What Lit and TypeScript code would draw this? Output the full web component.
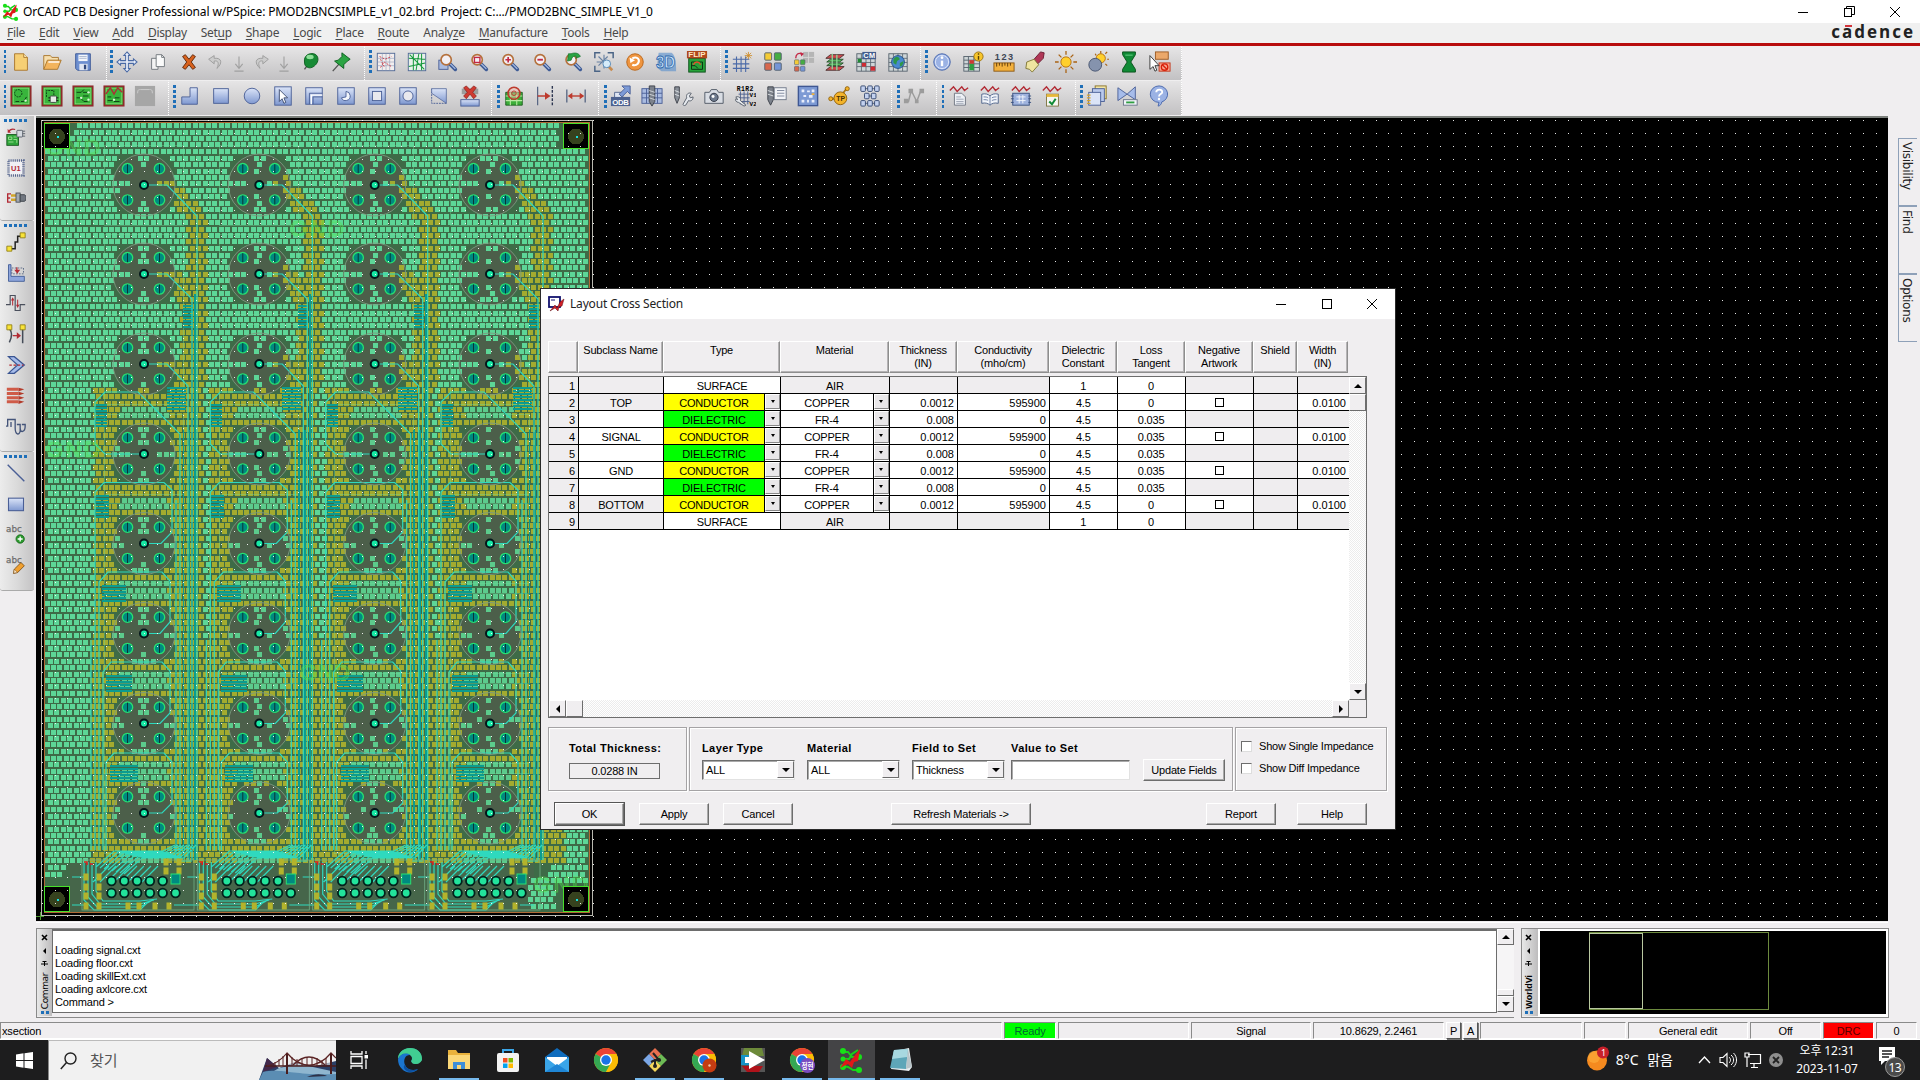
import { LitElement, html, svg, css, nothing } from "lit";
import { customElement } from "lit/decorators.js";

/* ---------- toolbar icons, all on a 24 x 24 grid ---------- */
const B = "#a9bbe0";
const BD = "#4a5f96";
const lens = (inner: any) => svg`<path d="M14 14l6 6" stroke="#3f5c96" stroke-width="4" stroke-linecap="round"/><path d="M14.5 14l5.5 5.5" stroke="#a9bfe4" stroke-width="1.4"/><circle cx="10" cy="9.500" r="5.600" fill="#f3f0f4" stroke="#b5713d" stroke-width="1.800"/>${inner}`;
const sheet = svg`<path d="M7 9h8l4 4v9H7z" fill="#eef1f6" stroke="#6d7480"/><path d="M9 13h5M9 15.500h8M9 18h8M9 20h8" stroke="#8a93a3" stroke-width=".8"/>`;
const wave = svg`<path d="M2 6l4-4 4 5 5-5 3 4 4-3" fill="none" stroke="#b22a34" stroke-width="1.500"/>`;
const board = (inner: any) => svg`<rect x="1.500" y="1.500" width="21" height="21" fill="#39b53c" stroke="#8e2b2b" stroke-width="2"/><rect x="3.500" y="3.500" width="17" height="17" fill="none" stroke="#86dd7c" stroke-width=".8"/>${inner}`;
const chk = (x: number, y: number, c: string) => svg`<rect x=${x} y=${y} width="7.500" height="8" rx="1" fill=${c} stroke="#53606f"/>`;
const table = svg`<rect x="2" y="3" width="20" height="19" fill="#cfd6d8" stroke="#58646e"/><path d="M2 8h20M2 12.500h20M2 17h20M7 3v19M12 3v19M17 3v19" stroke="#58646e" stroke-width=".9"/>`;

const ICONS: Record<string, any> = {
  new: svg`<path d="M5 3h10l4 4v14H5z" fill="#f6cf74" stroke="#a8752c"/><path d="M15 3v4h4" fill="#fff0bd" stroke="#a8752c"/>`,
  open: svg`<path d="M3 20V5h7l2 2h7v4" fill="#f7dfae" stroke="#a8752c"/><path d="M3 20l4-10h15l-4 10z" fill="#f3b45c" stroke="#a8752c"/><path d="M8 12h12" stroke="#fff" stroke-width="1.500"/>`,
  save: svg`<path d="M4 3h16v18H6l-2-2z" fill="#6d8fd0" stroke="#3a5796"/><rect x="7" y="4" width="10" height="7" fill="#f3f6fb"/><path d="M8 6h8M8 8h8" stroke="#a8b6cf"/><rect x="8" y="14" width="9" height="7" fill="#dfe5f1"/><rect x="13" y="15" width="2.500" height="5" fill="#32497c"/>`,
  move: svg`<path d="M12 1l3.500 4h-2v5.500h5.500v-2l4 3.500-4 3.500v-2h-5.500v5.500h2L12 23l-3.500-4h2v-5.500H5v2L1 12l4-3.500v2h5.500V5h-2z" fill="#e8eefa" stroke="#4a6aa5" stroke-width="1.100"/>`,
  copy: svg`<path d="M5 8h7v12H5z" fill="#f3f3f3" stroke="#71767c"/><path d="M10 4h6l3 3v10h-9z" fill="#fafafa" stroke="#71767c"/><path d="M16 4v3h3" fill="none" stroke="#71767c"/>`,
  del: svg`<path d="M5 6l3-2 4 5 4-5 3 2-4.500 6 4.500 6-3 2-4-5-4 5-3-2 4.500-6z" fill="#d8611d" stroke="#5d2508"/>`,
  undo: svg`<path d="M10 5L4 9l6 5v-3c4-1 6 2 3 8 6-5 6-12-3-11z" fill="#ccc" stroke="#9b9b9b"/>`,
  redo: svg`<path d="M14 5l6 4-6 5v-3c-4-1-6 2-3 8-6-5-6-12 3-11z" fill="#ccc" stroke="#9b9b9b"/>`,
  down: svg`<path d="M12 6v12M8 14l4 5 4-5M7 22h10" fill="none" stroke="#a0a0a0" stroke-width="1.200"/>`,
  pinball: svg`<path d="M6 20l5-7" stroke="#555" stroke-width="1.500"/><path d="M6 12c-1-7 5-10 10-9 5 1 6 7 3 11-3 4-7 5-9 4-3-1-4-3-4-6z" fill="#178a35" stroke="#0b5c1e"/><ellipse cx="12" cy="6.500" rx="4" ry="2.400" fill="#8fe09a"/>`,
  pin: svg`<path d="M3 22l8-9" stroke="#555" stroke-width="1.500"/><path d="M13 2l9 7-3 2-4 4v4l-10-8 4-1 4-4z" fill="#2ba443" stroke="#0b5c1e"/>`,
  rats1: svg`<rect x="2.500" y="2.500" width="19" height="19" fill="#f3eeee" stroke="#526a96"/><path d="M3 8h18M3 12h18M3 16h18M8 3v18M12 3v18M16 3v18" stroke="#9aa5bd" stroke-width=".7"/><path d="M5 6l6 3 7-3M6 18l4-6 8 5M6 9l4 8" stroke="#cf3945" fill="none" stroke-dasharray="2 1.500"/>`,
  rats2: svg`<rect x="2.500" y="2.500" width="19" height="19" fill="#e8f1ea" stroke="#526a96"/><path d="M3 8l18 1M3 17l18-4M8 3v18M14 3l-3 18M17 3v18M4 4l16 16" stroke="#16993c" fill="none" stroke-width="1.100"/>`,
  zwin: svg`<rect x="2" y="10" width="10" height="10" fill=${B} stroke=${BD}/>${lens(nothing)}`,
  zfit: lens(svg`<rect x="7" y="7" width="6" height="5.500" fill="none" stroke="#c22845" stroke-width="1.500"/>`),
  zin: lens(svg`<path d="M7 9.500h6M10 6.500v6" stroke="#c22845" stroke-width="1.800"/>`),
  zout: lens(svg`<path d="M7 9.500h6" stroke="#c22845" stroke-width="2"/>`),
  zprev: lens(svg`<path d="M10 3c5-2 9 0 10 3l-5 2 1-2c-3-1-5 0-6 4l-4 1 1-8z" fill="#2ba443" stroke="#0b6a22" stroke-width=".7"/>`),
  zsel: svg`<path d="M2 8V2h6M16 2h6v6M2 16v6h6" fill="none" stroke="#4a6486" stroke-width="1.600"/><path d="M12 4v15M4 12h14M6 6l10 10M16 6L6 16" stroke="#6780a2" stroke-width="1.200"/><path d="M17 17l4 4" stroke="#c88b4e" stroke-width="3"/><circle cx="15" cy="14" r="4.200" fill="#d6ecfa" stroke="#5285b5"/>`,
  refresh: svg`<circle cx="12" cy="12" r="9" fill="#ef9540" stroke="#b96518"/><path d="M9 8c6-3 9 2 6 6-2 2-4 2-6 1" fill="none" stroke="#fff" stroke-width="2.200"/><path d="M6 7l1 6 5-3z" fill="#fff"/>`,
  three: svg`<path d="M4 2h14c5 3 5 14 5 20H7l-5-4z" fill="#5e92cc" opacity=".65"/><text x="1" y="18.500" font-family="Liberation Sans" font-size="18" font-weight="700" fill="#cfe6fb" stroke="#2d68ab" stroke-width=".9" textLength="21" lengthAdjust="spacingAndGlyphs">3D</text>`,
  flip: svg`<rect x="3" y="8" width="18" height="15" fill="#27a33a" stroke="#0b4e18"/><path d="M6 12h12v8H6zM6 16h4l3 3" fill="none" stroke="#0a2c10"/><path d="M8 15c2-4 6-4 8 0" fill="none" stroke="#e0532c" stroke-width="1.600"/><rect x="1" y="0" width="22" height="8" fill="#b0481c"/><text x="2.500" y="7" font-family="Liberation Sans" font-size="7.500" font-weight="700" fill="#ffe7c2" textLength="19" lengthAdjust="spacingAndGlyphs">FLIP</text>`,
  grid: svg`<path d="M2 9h18M2 14h18M2 19h18M6 6v17M11 6v17M16 6v17" stroke="#4b6aa8" stroke-width="1.200"/><path d="M19 1v8M15 5h8M16 2l6 6M22 2l-6 6" stroke="#cf8a25" stroke-width=".9"/>`,
  four: svg`${chk(3, 2, "#f4cb36")}${chk(13.500, 2, "#46ad42")}${chk(3, 13, "#d8674c")}${chk(13.500, 13, "#7595d6")}`,
  fourb: svg`<path d="M11 1h12v12H11z" fill="#b5b5b5"/><path d="M17 1v12M11 7h12" stroke="#d9d9d9"/><path d="M3 8c0-5 3-6 6-5" stroke="#c22845" fill="none" stroke-width="1.500"/><path d="M8 1l4 2-3 3z" fill="#c22845"/><g transform="translate(1 9) scale(.65)">${chk(1, 1, "#f4cb36")}${chk(11, 1, "#46ad42")}${chk(1, 12, "#d8674c")}${chk(11, 12, "#7595d6")}</g>`,
  layers: svg`<path d="M2 8l5-4h15l-5 4z" fill="#d34b4f" stroke="#4c3130"/><path d="M3 12l4-3h14l-4 3zM3 16l4-3h14l-4 3z" fill="#58b460" stroke="#274f2b"/><path d="M2 21l5-4h15l-5 4z" fill="#d34b4f" stroke="#4c3130"/><path d="M9 3v17M14 4v17" stroke="#8fd298" stroke-width="1.500"/>`,
  cm: svg`${table}<rect x="3" y="8.500" width="4" height="4" fill="#1e8a33"/><rect x="7.500" y="13" width="4.500" height="4" fill="#cf2b32"/><rect x="17" y="17" width="5" height="4.500" fill="#cf2b32"/><rect x="8" y="1" width="15" height="8" fill="#425c8e"/><text x="9" y="8" font-family="Liberation Sans" font-size="8" font-weight="700" fill="#fff" textLength="13">CM</text>`,
  globe: svg`${table}<circle cx="12" cy="12" r="7" fill="#4989d0" stroke="#234e85"/><path d="M7 9c3-4 6-3 7 0l-3 2-1 4-3-2zM14 13l4-2c0 4-2 6-4 6z" fill="#2d9748"/>`,
  info: svg`<circle cx="12" cy="12" r="9" fill="#9bb2e4" stroke="#4766ab"/><circle cx="12" cy="12" r="7.200" fill="none" stroke="#dfe7fa"/><path d="M12 10.500v6" stroke="#fff" stroke-width="2.600"/><circle cx="12" cy="7.300" r="1.500" fill="#fff"/>`,
  tinfo: svg`<rect x="2" y="6" width="17" height="16" fill="#cfd6d8" stroke="#58646e"/><path d="M2 10h17M2 14h17M2 18h17M7 6v16M13 6v16" stroke="#58646e"/><rect x="8" y="10" width="5" height="4" fill="#cf3a32"/><rect x="8" y="14" width="5" height="7" fill="#2f9e41"/><circle cx="18" cy="6" r="5" fill="#f7c52b" stroke="#9b7210"/><path d="M18 5.500v4M18 2.500v1.500" stroke="#5c4204" stroke-width="1.500"/>`,
  ruler: svg`<text x="2" y="10" font-family="Liberation Sans" font-size="10" font-weight="700" fill="#3d4654" textLength="20">123</text><rect x="1" y="13" width="22" height="9" fill="#f3b13d" stroke="#8a5714"/><path d="M4 13v4M7 13v3M10 13v4M13 13v3M16 13v4M19 13v3" stroke="#5a370a"/>`,
  brush: svg`<path d="M11 9l7-8 4 1-1 6-6 6z" fill="#b03757" stroke="#6b1930"/><path d="M3 12l8-3 5 6-7 8-3-3-4-1z" fill="#efe4a0" stroke="#7e7535"/>`,
  sun: svg`<path d="M12 0v4M12 20v4M0 12h4M20 12h4M4 4l3 3M17 17l3 3M20 4l-3 3M4 20l3-3" stroke="#a96213" stroke-width="1.400"/><circle cx="12" cy="12" r="5.600" fill="#ffd02d" stroke="#b56e10"/>`,
  dim: svg`<path d="M15 0v3M22 9h2M20 3l2-2M9 3l1 2M20 14l2 2" stroke="#a96213" stroke-width="1.300"/><circle cx="15" cy="8" r="5" fill="#ffd02d" stroke="#b56e10"/><circle cx="9" cy="15" r="7" fill="#8593ad" stroke="#46536e"/>`,
  hour: svg`<path d="M5 1h14v3l-5 8 5 8v3H5v-3l5-8-5-8z" fill="#0f8a35" stroke="#075019"/><path d="M8 4.500h8" stroke="#6fd48c"/>`,
  noselect: svg`<rect x="7" y="1" width="14" height="8" fill="#eba86a" stroke="#9c5a23"/><rect x="11" y="13" width="12" height="9" fill="#f8a58e" stroke="#c2371c"/><circle cx="17" cy="17.500" r="3.500" fill="none" stroke="#d8200a" stroke-width="1.500"/><path d="M14.500 15l5 5" stroke="#d8200a" stroke-width="1.500"/><path d="M1 5v15l3.500-3 2 5 2-1-2-5H11z" fill="#fff" stroke="#333"/>`,
  b1: board(svg`<circle cx="9" cy="9" r="4" fill="none" stroke="#0c3a14" stroke-dasharray="2 1"/><path d="M12 18h3l3-5M6 18h4" stroke="#0c3a14" fill="none"/><circle cx="17" cy="17" r="1.300" fill="#d9f5d4"/>`),
  b2: board(svg`<path d="M6 13V6h8v5" fill="none" stroke="#0c3a14" stroke-dasharray="2 1"/><rect x="10" y="12" width="7" height="7" rx="1" fill="#e9ede9" stroke="#3d463f"/><path d="M8 14h2M8 17h2M17 14h2M17 17h2" stroke="#111"/>`),
  b3: board(svg`<path d="M5 8h5l3-3M5 14h4l4 4h4M12 12h6M12 8h6" fill="none" stroke="#0c3a14"/><circle cx="18" cy="8" r="1.300" fill="#d9f5d4"/><circle cx="10" cy="14" r="1.300" fill="#d9f5d4"/><circle cx="18" cy="16" r="1.300" fill="#d9f5d4"/>`),
  b4: board(svg`<path d="M3 10l5-7 4 7 4-7 5 5" fill="none" stroke="#b22a34" stroke-width="1.500"/><path d="M5 17h5l3-3h5M5 13h4M12 18h6" fill="none" stroke="#0c3a14"/><circle cx="12" cy="16" r="1.300" fill="#d9f5d4"/>`),
  b5: svg`<rect x="1" y="1" width="22" height="22" fill="#a6a6a6"/><path d="M4 9c0-4 1-4 3-4h10c2 0 3 0 3 4" fill="none" stroke="#cfcfcf"/>`,
  shL: svg`<path d="M12 3h8v18H3v-8h9z" fill="url(#blue)" stroke=${BD}/>`,
  shR: svg`<rect x="4" y="4" width="16" height="16" fill="url(#blue)" stroke=${BD}/>`,
  shC: svg`<circle cx="12" cy="12" r="8.500" fill="url(#blue)" stroke=${BD}/>`,
  shS: svg`<rect x="3" y="2" width="18" height="20" fill="url(#blue)" stroke=${BD}/><path d="M8 5v13l3-3 2 5 2-1-2-5h4z" fill="#fff" stroke="#3b4a70"/>`,
  shA: svg`<rect x="3" y="3" width="18" height="18" fill="url(#blue)" stroke=${BD}/><path d="M7 21V9h14M11 21v-8h10" fill="none" stroke=${BD}/><path d="M9 21V11h12" fill="none" stroke="#fff" stroke-width="1.500"/>`,
  shV: svg`<rect x="3" y="3" width="18" height="18" fill="url(#blue)" stroke=${BD}/><path d="M12 7a5 5 0 1 1-5 7l5-1z" fill="#f3f6fc" stroke=${BD}/>`,
  shW: svg`<rect x="3" y="3" width="18" height="18" fill="url(#blue)" stroke=${BD}/><rect x="7" y="7" width="10" height="10" fill="#e9e9ee" stroke=${BD}/>`,
  shO: svg`<rect x="3" y="3" width="18" height="18" fill="url(#blue)" stroke=${BD}/><circle cx="12" cy="12" r="5.500" fill="#e9e9ee" stroke=${BD}/>`,
  shT: svg`<path d="M4 4v16h16" fill="none" stroke=${BD} stroke-dasharray="2 1"/><path d="M4 4h16v16L4 9z" fill="url(#blue)" stroke=${BD} stroke-width=".8"/>`,
  shX: svg`<rect x="3" y="4" width="18" height="6" fill="#9d9d9d"/><path d="M8 1l4 4 4-4 3 2-4 5 4 4-3 3-4-5-4 5-3-3 4-4-4-5z" fill="#cf3a32" stroke="#7e1813" stroke-width=".7"/><rect x="2" y="16" width="20" height="7" fill="url(#blue)" stroke=${BD}/>`,
  gck: svg`<path d="M3 8h18v14H3z" fill="#3cae3a" stroke="#1c5c1f"/><path d="M3 12h18M3 17h18M8 8v14M15 8v14" stroke="#b9eaa4" stroke-width="1.200"/><circle cx="12" cy="9" r="6.500" fill="#f3b4a277" stroke="#bd3a2d" stroke-width="1.800"/><circle cx="12" cy="9" r="2.500" fill="none" stroke="#bd3a2d"/>`,
  dimA: svg`<path d="M4 2v20" stroke="#4a5a7a" stroke-width="1.200"/><path d="M20 1v22" stroke="#2c3550" stroke-width="1.500" stroke-dasharray="3 1.500"/><path d="M4 12h9" stroke="#bd3a2d" stroke-width="1.600"/><path d="M12 8l6 4-6 4z" fill="#bd3a2d"/>`,
  dimB: svg`<path d="M2 5v14M22 5v14" stroke="#4a5a7a" stroke-width="1.300"/><path d="M5 12h14" stroke="#bd3a2d" stroke-width="1.500"/><path d="M8 8.500L3 12l5 3.500zM16 8.500l5 3.500-5 3.500z" fill="#bd3a2d"/>`,
  odb: svg`<path d="M5 8h9v6H5z" fill="#dfe6f3" stroke="#54678f"/><path d="M10 10l6-6-3-3h9v9l-3-3-6 6z" fill="#7c9ad6" stroke=${BD}/><rect x="1" y="13" width="21" height="10" fill="#4d6290"/><text x="2.500" y="21.500" font-family="Liberation Sans" font-size="8.500" font-weight="700" fill="#fff" textLength="18">ODB</text>`,
  drill: svg`<rect x="1" y="4" width="22" height="16" fill=${B} stroke=${BD}/><path d="M1 9h22M1 14h22M6 4v16M18 4v16" stroke=${BD}/><path d="M9 1h6v17l-3 5-3-5z" fill="#7c828c" stroke="#3b4048"/><path d="M9 6l6 2M9 10l6 2M9 14l6 2" stroke="#d2d6dc"/>`,
  wrench: svg`<path d="M3 2h5v12l-2.500 6L3 14z" fill="#8a9099" stroke="#3b4048"/><path d="M3 6l5 2M3 10l5 2" stroke="#dfe2e6"/><path d="M12 21l4-7c-1-4 2-6 5-5l-2 3 1 2 3-1c0 4-3 5-5 4l-3 5c-2 1-3 0-3-1z" fill="#e6e9ee" stroke="#555d68"/>`,
  camera: svg`<path d="M2 8h5l2-3h6l2 3h5v12H2z" fill="#d9dde4" stroke="#4e5664"/><circle cx="12" cy="13.500" r="4.500" fill="#6e7a8e" stroke="#2f3644"/><circle cx="11" cy="12.500" r="1.600" fill="#fff"/>`,
  r1r2: svg`<path d="M5 10h12M5 14h12M5 18h12M7 7v14M11 7v14M15 7v14" stroke="#4b5f8d"/><text x="3" y="6" font-family="Liberation Mono" font-size="7" font-weight="700" textLength="18">R1R2</text><text x="17" y="13" font-family="Liberation Mono" font-size="6.500" font-weight="700">V1</text><text x="17" y="23" font-family="Liberation Mono" font-size="6.500" font-weight="700">V2</text><path d="M2 13c3-1 6 1 5 4l6 5-2 1-6-4c-3 0-4-3-3-4l2 1z" fill="#e6e9ee" stroke="#555d68"/>`,
  legend: svg`<path d="M2 2h6v14l-3 6-3-6z" fill="#7c828c" stroke="#3b4048"/><path d="M2 6l6 2M2 10l6 2" stroke="#dfe2e6"/><rect x="9" y="3" width="13" height="13" fill="#f2f4f8" stroke="#6f7889"/><path d="M12 6h8M12 9h8M12 12h8" stroke="#7d879b"/>`,
  panel: svg`<rect x="1.500" y="1.500" width="21" height="21" fill="#7d9ad4" stroke="#3f5793" stroke-width="1.500"/><path d="M5 5h3v3H5zM11 6h3v2h-3zM16 5h3v3h-3zM7 11h3v2H7zM13 11h4v3h-4zM5 16h3v3H5zM11 16h2v3h-2zM16 16h3v3h-3z" fill="#e9eefb"/><path d="M16 9h3v2h-3z" fill="#f0b13c"/>`,
  tp: svg`<path d="M4 15h8l8-11" stroke="#b07812" stroke-width="2" fill="none"/><circle cx="3" cy="15" r="2.200" fill="#f3b32a" stroke="#8f600b"/><circle cx="21" cy="4" r="2.200" fill="#f3b32a" stroke="#8f600b"/><circle cx="13.500" cy="14.500" r="7" fill="#f3b32a" stroke="#8f600b"/><text x="9" y="17.500" font-family="Liberation Sans" font-size="7.500" font-weight="700" fill="#4a3103">TP</text>`,
  nodes: svg`<path d="M5 4h14M5 20h14M9 12h8" stroke="#4a5a7a"/>${[[2, 1], [9.5, 1], [17, 1], [6, 9], [13.5, 9], [2, 17], [9.5, 17], [17, 17]].map(([x, y]) => svg`<rect x=${x} y=${y} width="5" height="6" rx="1" fill="#c3d1ef" stroke="#33466f"/>`)}`,
  zig: svg`<path d="M3 18h3L9 6l6 12 5-13" stroke="#9c9c9c" stroke-width="1.600" fill="none"/><path d="M1 15h5v5H1zM6 4h5v5H6zM13 16h4v4h-4zM18 4h5v5h-5z" fill="#9c9c9c"/>`,
  rep: svg`${sheet}${wave}`,
  book: svg`${wave}<path d="M3 10c4-1 7 0 9 2 2-2 5-3 9-2v10c-4-1-7 0-9 2-2-2-5-3-9-2z" fill="#f2f5fa" stroke="#4b6189"/><path d="M12 12v10M5 13c2 0 4 0 5 1M5 16c2 0 4 0 5 1M14 14c2-1 3-1 5-1M14 17c2-1 3-1 5-1" stroke="#6a7ea4" fill="none"/>`,
  chip: svg`${wave}<rect x="3" y="9" width="18" height="13" fill="#9fb3de" stroke="#38507f"/><path d="M1 12h3M1 15h3M1 19h3M20 12h3M20 15h3M20 19h3" stroke="#38507f"/><path d="M7 13h10M7 17h10M10 11v9M14 11v9" stroke="#f4f7fd"/>`,
  okl: svg`${wave}<rect x="6" y="10" width="13" height="13" fill="#f7f7f2" stroke="#7d7340"/><path d="M6 10h13v3H6z" fill="#e8b93a"/><path d="M9 18l3 3 4-6" fill="none" stroke="#0f8a35" stroke-width="2.200"/>`,
  docs: svg`<rect x="10" y="1" width="12" height="14" fill="#f2e6a8" stroke="#8a7326"/><rect x="7" y="4" width="13" height="14" fill="#b9c9ec" stroke=${BD}/><rect x="3" y="8" width="13" height="14" fill="#dbe4f7" stroke=${BD}/><path d="M1 11h4M1 14h4M1 17h4M1 20h4" stroke="#d9a428" stroke-width="1.500"/>`,
  bow: svg`<path d="M1 3l10 7 9-8v14l-9-6-10 7z" fill="#a6bcea" stroke=${BD}/><rect x="7" y="16" width="15" height="6" fill="#f0f3f8" stroke="#6a7488"/><path d="M10 19h9" stroke="#2f9e41" stroke-width="2"/>`,
  help: svg`<path d="M12 1a9.500 9 0 0 1 3 17.500c0 2-2 4.500-4 4.500l1-4A9.500 9 0 0 1 12 1z" fill="#9bb2e4" stroke="#4766ab"/><path d="M9 8c0-4 7-4 6.500 0-.3 2-3.500 2-3.500 4.500" fill="none" stroke="#fff" stroke-width="2"/><circle cx="12" cy="15.300" r="1.300" fill="#fff"/>`,
  place: svg`<rect x="1" y="9" width="14" height="13" fill="#2fa63a" stroke="#14521b"/><path d="M3 12h4v3H3zM9 12h4M3 18h6M9 15h4v4" stroke="#a7e59e" fill="none"/><rect x="13" y="4" width="7" height="8" rx="1" fill="#d5d9df" stroke="#4c535e"/><path d="M20 5h3M20 8h3M20 11h3" stroke="#4c535e"/><path d="M3 6c2-4 5-4 8-3" fill="none" stroke="#b22a34" stroke-width="1.500"/><path d="M2 2v5h4z" fill="#b22a34"/>`,
  u1: svg`<rect x="4" y="4" width="16" height="16" fill="#f0f0f4"/><rect x="3" y="3" width="18" height="18" fill="none" stroke="#52628c" stroke-width="3" stroke-dasharray="1.200 1.300"/><text x="6" y="15" font-family="Liberation Sans" font-size="9" font-weight="700" fill="#b22a34">U1</text>`,
  plug: svg`<path d="M6 7H2v10h4M2 12h3" fill="none" stroke="#b22a34" stroke-width="1.600"/><path d="M6 9h6M6 14h6" stroke="#d2a52a" stroke-width="3"/><rect x="12" y="6" width="5" height="11" fill="#a4a9b1" stroke="#444a54"/><path d="M17 8h5c3 1 3 7 0 8h-5z" fill="#70767f" stroke="#33383f"/>`,
  route: svg`<path d="M5 20h6v-8h3V5h6" fill="none" stroke="#222" stroke-width="1.800"/><path d="M1 17h6v6H1zM17 1h6v6h-6z" fill="#f8e338" stroke="#8a7a12"/>`,
  slide: svg`<path d="M3 2h3v14h16v6H3z" fill="#8ea6dc" stroke="#3a5592"/><path d="M7 6h14v7H7z" fill="none" stroke="#4a5a7a" stroke-dasharray="2 1.500"/><path d="M13 5v5" stroke="#b22a34" stroke-width="1.500"/><path d="M10 8h7l-3.500 5z" fill="#b22a34"/>`,
  tune: svg`<path d="M0 14h5V3h6v18h6v-7h6" fill="none" stroke="#4a4f5c" stroke-width="1.400"/><path d="M8 15V7M14 8v8" stroke="#b22a34" stroke-width="1.200"/><path d="M6 9l2-4 2 4zM12 14h4l-2 4z" fill="#b22a34"/>`,
  fan: svg`<path d="M4 5c3 5 4 9 0 17M20 5v18" fill="none" stroke="#454c58" stroke-width="1.800"/><path d="M1 1h6v6H1zM17 1h6v6h-6z" fill="#f8e338" stroke="#8a7a12"/><path d="M8 14h6" stroke="#b22a34" stroke-width="1.500"/><path d="M13 10l5 4-5 4z" fill="#b22a34"/>`,
  arrow: svg`<path d="M3 2h7l12 10-12 10H3l3-3 8-7-8-7z" fill="#a6bcea" stroke="#3a5592" stroke-width="1.500"/><path d="M4 12h17" stroke="#b22a34" stroke-dasharray="3 2" stroke-width="1.500"/>`,
  bars: svg`<path d="M1 4h14M1 9h14M1 14h14M1 19h14" stroke="#cf5b48" stroke-width="3.600"/><path d="M15 2l7 2-7 2.500zM15 7l7 2-7 2.500zM15 12l7 2-7 2.500zM15 17l7 2-7 2.500z" fill="#b23a2a"/>`,
  snake: svg`<path d="M0 11h2V3h9v10c0 9 5 9 6 4V9h-4M6 12V6M17 13c0 7 6 5 6-2V9h-4" fill="none" stroke="#45557a" stroke-width="1.600"/>`,
  line: svg`<path d="M2 2l20 20" stroke="#4a5f96" stroke-width="1.700"/>`,
  rect: svg`<rect x="3" y="5" width="18" height="15" fill="url(#blue)" stroke=${BD} stroke-width="1.300"/>`,
  abcp: svg`<text x="0" y="10" font-family="DejaVu Sans" font-size="10.500" fill="#6d6d6d" stroke="#6d6d6d" stroke-width=".3" textLength="19">abc</text><circle cx="17" cy="18" r="5" fill="#2c9a2f" stroke="#176a1a"/><path d="M14 18h6M17 15v6" stroke="#fff" stroke-width="1.600"/>`,
  abce: svg`<text x="0" y="10" font-family="DejaVu Sans" font-size="10.500" fill="#6d6d6d" stroke="#6d6d6d" stroke-width=".3" textLength="19">abc</text><path d="M9 22l1-5 8-8 4 4-8 8z" fill="#f0a030" stroke="#7a4a10"/><path d="M9 22l1-5 4 4z" fill="#f7e2c0" stroke="#7a4a10" stroke-width=".6"/>`,
};
const icon = (n: string) => html`<svg class="ic" viewBox="0 0 24 24">${ICONS[n]}</svg>`;

type Group = { w: number; pad: number; items: string[] };
const ROW1: Group[] = [
  { w: 107, pad: 3.5, items: ["new", "open", "save"] },
  { w: 258, pad: 3, items: ["move", "copy", "del", "undo~", "down~", "redo~", "down~", "pinball", "pin"] },
  { w: 355.500, pad: 4, items: ["rats1", "rats2", "zwin", "zfit", "zin", "zout", "zprev", "zsel", "refresh", "three", "flip"] },
  { w: 200, pad: 4.500, items: ["grid", "four", "fourb", "layers", "cm", "globe"] },
  { w: 261.500, pad: 4.500, items: ["info", "tinfo", "ruler", "brush", "sun", "dim", "hour", "noselect"] },
];
const ROW2: Group[] = [
  { w: 169, pad: 3.5, items: ["b1", "b2", "b3", "b4", "b5"] },
  { w: 323, pad: 4, items: ["shL", "shR", "shC", "shS", "shA", "shV", "shW", "shO", "shT", "shX"] },
  { w: 107, pad: 5, items: ["gck", "dimA", "dimB"] },
  { w: 293, pad: 5, items: ["odb", "drill", "wrench", "camera", "r1r2", "legend", "panel", "tp", "nodes"] },
  { w: 45, pad: 5, items: ["zig"] },
  { w: 139, pad: 4.500, items: ["rep", "book", "chip", "okl"] },
  { w: 106, pad: 4, items: ["docs", "bow", "help"] },
];
const SIDE: { h: number; items: string[] }[] = [
  { h: 105, items: ["place", "u1", "plug"] },
  { h: 231, items: ["route", "slide", "tune", "fan", "arrow", "bars", "snake"] },
  { h: 139, items: ["line", "rect", "abcp", "abce"] },
];
const MENUS = ["_File", "_Edit", "_View", "_Add", "_Display", "Set_up", "_Shape", "_Logic", "_Place", "_Route", "Analy_ze", "_Manufacture", "_Tools", "_Help"];

/* ---------- printed circuit board ---------- */
type P = [number, number];
const COLS = [144, 259.3, 374.7, 490];
const ROWS = [185, 274, 364, 454, 543.5, 633.5, 723.5, 813];
const segDist = (x: number, y: number, a: P, b: P) => {
  const dx = b[0] - a[0], dy = b[1] - a[1];
  const t = Math.max(0, Math.min(1, ((x - a[0]) * dx + (y - a[1]) * dy) / (dx * dx + dy * dy || 1)));
  return Math.hypot(x - a[0] - t * dx, y - a[1] - t * dy);
};
const near = (x: number, y: number, pts: P[], d: number) => pts.some((p, i) => i > 0 && segDist(x, y, pts[i - 1], p) < d);
const TR1: P[] = [[0, 185], [23, 185], [53, 216], [53, 860]];
const TR2: P[] = [[0, 274], [23, 274], [48, 299], [48, 860]];
const TR3: P[] = [[0, 364], [23, 364], [44, 386], [44, 860]];
const HOLES: P[] = [[-16.5, -16.3], [15.5, -16.3], [-16.5, 15], [15.5, 15]];

function brickKind(x: number, y: number): "g" | "y" | "t" | null {
  if ((x < 77 && y < 132 && y > 122) || (x < 71 && y < 150) || (x > 558 && y < 150)) return null;
  if ((x < 71 && y > 880) || (x > 556 && y > 882)) return null;
  if (y > 863 && x > 66 && x < 530) return null;
  if (y > 863 && x >= 530) return y < 880 && x < 548 ? null : "g";
  let k = 0;
  for (let i = 1; i < 4; i++) if (Math.abs(x - COLS[i]) < Math.abs(x - COLS[k])) k = i;
  const lx = x - COLS[k];
  for (const ry of ROWS) {
    const ly = y - ry;
    if (Math.abs(ly) > 34 || Math.abs(lx) > 34) continue;
    if (Math.hypot(lx, ly) < 10) return null;
    if (HOLES.some(([hx, hy]) => Math.hypot(lx - hx, ly - hy) < 13.5)) return null;
    if (Math.hypot(lx, ly) > 23 && Math.hypot(lx, ly) < 28 && Math.abs(lx) < 26 && Math.abs(lx) > 8) return null;
    if (ry > 400 && Math.hypot(lx, ly) < 30) return "t";
  }
  const lower = y > 386;
  if (lower) {
    if (x < 92 || x > 566) return "g";
    const band = (y - 364) % 89.7;
    if (Math.abs(lx) < 24 && band > 40 && band < 58 && x > 110) return "t";
    if (lx < 58 && lx > -50) return "y";
    return lx > 58 && lx < 64 ? "y" : y > 640 ? "y" : "g";
  }
  if (near(lx, y, TR1, 10) && lx > 14) return "y";
  if (near(lx, y, TR2, 10) && lx > 14) return "y";
  if (near(lx, y, TR3, 10) && lx > 14) return "y";
  if (k > 0 && near(lx + 115.3, y, TR1, 10)) return "y";
  return "g";
}

const BRICKS = (() => {
  const out: Record<string, string> = { g: "", y: "", t: "" };
  const step = 6.45;
  for (let r = 0; r < 123; r++) {
    const y = Math.round(123.5 + r * step - (r % 3 === 0 ? 0.4 : 0));
    for (let c = 0; c < 86; c++) {
      const x = Math.round(44.5 + c * step + (r % 2 ? 3.2 : 0));
      if (x > 585 || y > 908) continue;
      const k = brickKind(x + 2.5, y + 2.5);
      if (k) out[k] += `M${x} ${y}h5v5h-5z`;
    }
  }
  return out;
})();

const DOTS = (() => {
  let d = "";
  for (let j = 0; j < 63; j++)
    for (let i = 0; i < 144; i++) d += `M${Math.round(41.7 + i * 12.826)} ${Math.round(120 + j * 12.835)}h1v1h-1z`;
  return d;
})();

const poly = (x: number, pts: P[]) => "M" + pts.map(([a, b]) => `${a + x} ${b}`).join("L");
const TRACES = (() => {
  let bright = "", teal = "";
  COLS.forEach((x) => {
    [TR1, TR2, TR3].forEach((t) => (bright += poly(x, t)));
    teal += poly(x, [[51, 294], [51, 860]]);
    bright += poly(x, [[0, 454], [-39, 454], [-49, 444], [-49, 402], [-39, 392], [-6, 392], [36, 434], [36, 860]]);
    bright += poly(x, [[0, 543.5], [17, 543.5], [28, 532], [28, 490], [20, 482.500], [-40, 482.500], [-49, 492], [-49, 850]]);
    bright += poly(x, [[0, 633.5], [16, 633.5], [26, 622], [26, 581], [18, 572], [-36, 572], [-45, 582], [-45, 850]]);
    bright += poly(x, [[0, 723.5], [16, 723.5], [26, 713], [26, 671], [18, 662], [-33, 662], [-41, 672], [-41, 850]]);
    bright += poly(x, [[0, 813], [18, 813], [28, 803], [28, 762], [20, 753], [-30, 753], [-38, 762], [-38, 850]]);
    [39.5, 45.500].forEach((o) => (teal += poly(x, [[o, 430], [o, 860]])));
    bright += poly(x, [[32, 500], [32, 860]]) + poly(x, [[-53, 640], [-53, 850]]);
    const serp = (sx: number, sy: number, w: number, n: number) => {
      for (let i = 0; i < n; i++) teal += `M${x + sx} ${sy + i * 3}h${w}`;
    };
    serp(39, 306, 10, 8);
    serp(23, 388, 19, 8);
    serp(-48, 405, 11, 8);
    serp(-48, 496, 13, 8);
    serp(-42, 586, 24, 6);
    serp(-38, 676, 26, 6);
    serp(-34, 766, 28, 6);
    for (let i = 0; i < 8; i++) {
      bright += poly(x, [[52 - i * 3, 845], [40 - i * 3, 858 - i], [-2 - i * 4, 858 - i], [-20 - i * 4, 874 - i]]);
      bright += poly(x, [[14 - i * 7, 866], [-2 - i * 7, 882]]);
      if (i < 4) bright += poly(x, [[-60 + i * 4, 862], [-60 + i * 4, 900 - i * 3], [-50 + i * 3, 910 - i * 3], [-4, 910 - i * 3], [4 + i * 3, 902 - i]]);
    }
    bright += poly(x, [[-72, 877], [-60, 877]]) + poly(x, [[-72, 905], [-60, 905]]) + poly(x, [[32, 861], [48, 861]]) + poly(x, [[30, 905], [44, 905]]);
  });
  return { bright, teal };
})();

@customElement("pcb-canvas")
export class PcbCanvas extends LitElement {
  static styles = css`
    :host { display: block; }
    svg { display: block; }
    .mark { font: 22px "Liberation Sans", sans-serif; fill: none; stroke: #52e84e; stroke-width: 1.2; opacity: .5; }
  `;
  private comp(x: number, y: number) {
    return svg`
      <circle cx=${x} cy=${y} r="31" fill="none" stroke="#7d9a80" stroke-width=".9"/>
      ${HOLES.map(([a, b]) => svg`<circle cx=${x + a} cy=${y + b} r="5.200" fill="#008a80" stroke="#28e070" stroke-width="1.300"/><path d=${`M${x + a} ${y + b - 4.5}v9`} stroke="#0a3434"/>`)}
      <circle cx=${x} cy=${y} r="4" fill="#16e8a4" stroke="#04161a" stroke-width="2"/>`;
  }
  private conn(x: number) {
    const pins: any[] = [];
    for (let i = 0; i < 6; i++) {
      const px = x - 32.5 + i * 12.8;
      if (i < 5) pins.push(svg`<circle cx=${px} cy="881" r="4.300" fill="#22e39b" stroke="#03211c" stroke-width="1.800"/>`);
      pins.push(svg`<circle cx=${px} cy="893" r="4.300" fill="#22e39b" stroke="#03211c" stroke-width="1.800"/>`);
    }
    return svg`
      <rect x=${x - 62} y="860" width="112" height="50" fill="none" stroke="#6fae86" stroke-width=".8"/>
      ${[[-58, 877], [-45, 877], [-58, 887], [-45, 887], [-58, 896], [-45, 896], [-58, 906], [-45, 906], [-16, 906], [-5, 906], [11, 906], [25, 906], [22, 862], [35, 862], [22, 871], [35, 871]].map(([a, b]) => svg`<rect x=${x + a - 2.5} y=${b - 3.5} width="5" height="7" fill="#b3b32c"/>`)}
      <rect x=${x + 27} y="874" width="9" height="10" fill="#008a80" stroke="#28e070"/>
      ${pins}
      <path d=${`M${x - 60} 862h3v3M${x - 54} 864h3`} stroke="#e01c1c" stroke-width="1.500" fill="none"/>`;
  }
  render() {
    const parts = COLS.flatMap((x) => ROWS.map((y) => [x, y]));
    return html`<svg width="1852" height="803" viewBox="36 118 1852 803" shape-rendering="crispEdges">
      <rect x="36" y="118" width="1852" height="803" fill="#000"/>
      <rect x="44" y="122.500" width="545.500" height="790" fill="#3e6b47" stroke="#b06a35"/>
      <rect x="70" y="862" width="464" height="50" fill="#46664a"/>
      <g shape-rendering="auto">${parts.map(([x, y]) => svg`<circle cx=${x} cy=${y} r="31" fill="#4c5f4a"/>`)}</g>
      <path d=${BRICKS.g} fill="#5dd697"/><path d=${BRICKS.y} fill="#a3ab2f"/><path d=${BRICKS.t} fill="#5ccb8c"/>
      <g fill="none" stroke="#6fd99a" opacity=".4">${parts.map(([x, y]) => svg`<rect x=${x - 40} y=${y - 40} width="79" height="80"/>`)}</g>
      <path d=${TRACES.teal} stroke="#0b9c90" stroke-width="1.800" fill="none"/>
      <path d=${TRACES.bright} stroke="#2fd9be" stroke-width="1.200" fill="none" shape-rendering="auto"/>
      <g shape-rendering="auto">${parts.map(([x, y]) => this.comp(x, y))}${COLS.map((x) => this.conn(x))}</g>
      <g class="mark"><text x="46" y="155" textLength="54">GND</text><text x="290" y="236" textLength="54">GND</text><text x="46" y="457" textLength="54">GND</text><text x="300" y="680" textLength="50">GND</text><text x="534" y="892" textLength="54">GND</text></g>
      ${[[44.5, 123.5], [563.5, 123.5], [44.5, 886.5], [563.5, 886.5]].map(([x, y]) => svg`<rect x=${x} y=${y} width="25" height="25" fill="#000" stroke="#48e02c"/><circle cx=${x + 12.5} cy=${y + 13} r="8" fill="#36421e"/><rect x=${x + 12} y=${y + 12.5} width="2" height="2" fill="#18e0e0"/>`)}
      <rect x="41.500" y="120.500" width="551" height="794.500" fill="none" stroke="#b9b9b0"/>
      <path d=${DOTS} fill="#fff" opacity=".9"/>
      <path d="M36 916h8M40.500 912v8" stroke="#4c9a30"/>
    </svg>`;
  }
}

/* ---------- dialog ---------- */
const GRID_COLS = ["", "Subclass Name", "Type", "Material", "Thickness\n(IN)", "Conductivity\n(mho/cm)", "Dielectric\nConstant", "Loss\nTangent", "Negative\nArtwork", "Shield", "Width\n(IN)"];
type Layer = readonly [string, string, string, string, string, string, string, boolean];
const SURFACE: Layer = ["", "SURFACE", "AIR", "", "", "1", "0", false];
const STACK: Layer[] = [
  SURFACE,
  ["TOP", "CONDUCTOR", "COPPER", "0.0012", "595900", "4.5", "0", true],
  ["", "DIELECTRIC", "FR-4", "0.008", "0", "4.5", "0.035", false],
  ["SIGNAL", "CONDUCTOR", "COPPER", "0.0012", "595900", "4.5", "0.035", true],
  ["", "DIELECTRIC", "FR-4", "0.008", "0", "4.5", "0.035", false],
  ["GND", "CONDUCTOR", "COPPER", "0.0012", "595900", "4.5", "0.035", true],
  ["", "DIELECTRIC", "FR-4", "0.008", "0", "4.5", "0.035", false],
  ["BOTTOM", "CONDUCTOR", "COPPER", "0.0012", "595900", "4.5", "0", true],
  SURFACE,
];

@customElement("cross-section-dialog")
export class CrossSectionDialog extends LitElement {
  static styles = css`
    :host { display: flex; flex-direction: column; width: 854px; height: 540px; background: #f0eef0; box-sizing: border-box; font: 11px/13px "Liberation Sans", Arial, sans-serif; color: #000; letter-spacing: -.2px; box-shadow: 0 0 0 1px #2a2a2a; }
    .title { height: 30px; background: #fff; display: flex; align-items: center; padding: 0 17px 0 7px; font: 12px/16px "Noto Sans", "Open Sans", sans-serif; color: #222; letter-spacing: -.18px; }
    .title svg { display: block; }
    .name { flex: 1; margin-left: 5px; padding-bottom: 1px; }
    .wb { display: flex; gap: 33.500px; }
    .head { display: grid; grid-template-columns: 30px 85px 117px 109px 68px 92px 68px 68px 68px 44px 51px; margin: 22px 0 0 7px; height: 32px; }
    .head div { white-space: pre; text-align: center; padding-top: 2px; border: 1px solid; border-color: #fff #8e8e8e #8e8e8e #fff; box-shadow: inset -1px -1px #b5b3b5; background: #f0eef0; }
    .box { margin: 3px 0 0 7px; width: 819px; height: 342px; box-sizing: border-box; border: 1px solid #6d6d6d; display: grid; grid-template-columns: 1fr 17px; grid-template-rows: 1fr 17px; background: #fff; }
    .rows { overflow: hidden; }
    .row { display: grid; grid-template-columns: 30px 85px 117px 108.600px 68.400px 92px 67.600px 68px 68px 44px 1fr; height: 17px; }
    .c { border-right: 1px solid #000; border-bottom: 1px solid #000; text-align: center; line-height: 18px; white-space: nowrap; display: flex; justify-content: center; box-sizing: border-box; height: 17px; }
    .c:last-child { border-right: 0; padding-right: 3px; }
    .r { justify-content: flex-end; padding-right: 3px; letter-spacing: 0; }
    .gray { background: #efedef; }
    .c span { flex: 1; height: 16px; }
    .c .yel { background: #ff0; }
    .c .grn { background: #0f0; }
    .c .sep { border-right: 1px solid #000; }
    .dd { width: 15px; height: 15px; background: #e9e7e9; border: 1px solid; border-color: #fff #888 #888 #fff; box-sizing: border-box; display: flex; align-items: center; justify-content: center; }
    .dd i { border: 2.500px solid transparent; border-top: 3px solid #000; border-bottom: 0; }
    .cb { width: 9px; height: 9px; box-sizing: border-box; border: 1px solid #000; background: #fff; align-self: center; }
    .track { background: repeating-conic-gradient(#fff 0 25%, #ececec 0 50%) 0 0 / 2px 2px; display: flex; }
    .v { flex-direction: column; }
    .sb { width: 17px; height: 17px; box-sizing: border-box; background: #f0eef0; border: 1px solid; border-color: #fff #6d6d6d #6d6d6d #fff; display: flex; align-items: center; justify-content: center; }
    .fill { flex: 1; }
    .up { border: 4px solid transparent; border-bottom-color: #000; border-top: 0; }
    .dn { border: 4px solid transparent; border-top-color: #000; border-bottom: 0; }
    .lf { border: 4px solid transparent; border-right-color: #000; border-left: 0; }
    .rt { border: 4px solid transparent; border-left-color: #000; border-right: 0; }
    .groups { display: flex; gap: 2px; margin: 9px 0 0 7px; height: 64px; }
    .g { border: 1px solid #a5a3a5; box-shadow: inset 1px 1px #fff, 1px 1px #fff; box-sizing: border-box; display: flex; }
    .g1 { width: 139px; flex-direction: column; padding: 13px 0 0 20px; }
    .g2 { width: 544px; padding: 13px 0 0 12px; }
    .g3 { width: 152px; flex-direction: column; padding: 12px 0 0 5px; gap: 9px; }
    b { display: block; letter-spacing: .4px; height: 17px; line-height: 14px; white-space: nowrap; }
    .val { width: 91px; height: 16px; box-sizing: border-box; border: 1px solid #6d6d6d; text-align: center; line-height: 15px; margin-top: 5px; }
    .f { width: 105px; }
    .f.w { width: 132px; margin-left: -6px; }
    .combo { margin-top: 2px; width: 93px; height: 20px; box-sizing: border-box; border: 1px solid; border-color: #6d6d6d #e2e2e2 #e2e2e2 #6d6d6d; background: #fff; display: flex; line-height: 18px; padding-left: 3px; box-shadow: inset 1px 1px #a9a9a9; }
    .combo span { flex: 1; }
    .inp { width: 119px; }
    .btn { box-sizing: border-box; height: 22px; border: 1px solid; border-color: #fff #6d6d6d #6d6d6d #fff; box-shadow: inset -1px -1px #a9a9a9; text-align: center; line-height: 20px; background: #f0eef0; }
    .up1 { width: 82px; margin-top: 18px; }
    .ck { display: flex; align-items: center; gap: 7px; white-space: nowrap; height: 13px; }
    .ck i { width: 11px; height: 11px; box-sizing: border-box; background: #fff; border: 1px solid; border-color: #6d6d6d #ddd #ddd #6d6d6d; }
    .foot { display: flex; margin: 12px 0 0 14px; }
    .foot .def { outline: 1px solid #555; }
  `;
  render() {
    const dd = html`<div class="dd"><i></i></div>`;
    const combo = (l: string, v: string) => html`<div class="f"><b>${l}</b><div class="combo"><span>${v}</span><div class="sb"><i class="dn"></i></div></div></div>`;
    return html`
      <div class="title">
        <svg width="17" height="17" viewBox="0 0 17 17"><rect x="1" y="1" width="11" height="10" fill="#fff" stroke="#12126e" stroke-width="1.800"/><path d="M3 4h4" stroke="#12126e"/><path d="M2 15l5-6 2 3 3-6 4-3-2 7-3 1-1 4-3-3z" fill="#d01f28" stroke="#5b0a10" stroke-width=".5"/></svg>
        <div class="name">Layout Cross Section</div>
        <div class="wb">
          <svg width="12" height="12"><path d="M1 6.500h10" stroke="#000"/></svg>
          <svg width="12" height="12"><rect x="1.500" y="1.500" width="9" height="9" fill="none" stroke="#000"/></svg>
          <svg width="12" height="12"><path d="M1 1l10 10M11 1L1 11" stroke="#000"/></svg>
        </div>
      </div>
      <div class="head">${GRID_COLS.map((c) => html`<div>${c}</div>`)}</div>
      <div class="box">
        <div class="rows">${STACK.map((r, i) => {
          const surf = r[1] === "SURFACE";
          const name = surf || i === 1 || i === 7 ? "gray" : "";
          return html`<div class="row">
            <div class="c r gray">${i + 1}</div>
            <div class="c ${name}">${r[0]}</div>
            <div class="c"><span class=${surf ? "" : r[1] === "CONDUCTOR" ? "yel sep" : "grn sep"}>${r[1]}</span>${surf ? nothing : dd}</div>
            <div class="c ${surf ? "gray" : ""}"><span class=${surf ? "" : "sep"}>${r[2]}</span>${surf ? nothing : dd}</div>
            <div class="c r ${surf ? "gray" : ""}">${r[3]}</div>
            <div class="c r ${surf ? "gray" : ""}">${r[4]}</div>
            <div class="c">${r[5]}</div>
            <div class="c">${r[6]}</div>
            <div class="c ${r[7] ? "" : "gray"}">${r[7] ? html`<div class="cb"></div>` : nothing}</div>
            <div class="c gray"></div>
            <div class="c r ${r[7] ? "" : "gray"}">${r[7] ? "0.0100" : ""}</div>
          </div>`;
        })}</div>
        <div class="track v"><div class="sb"><i class="up"></i></div><div class="sb"></div><div class="fill"></div><div class="sb"><i class="dn"></i></div></div>
        <div class="track"><div class="sb"><i class="lf"></i></div><div class="sb"></div><div class="fill"></div><div class="sb"><i class="rt"></i></div></div>
        <div class="gray"></div>
      </div>
      <div class="groups">
        <div class="g g1"><b>Total Thickness:</b><div class="val">0.0288 IN</div></div>
        <div class="g g2">${combo("Layer Type", "ALL")}${combo("Material", "ALL")}${combo("Field to Set", "Thickness")}
          <div class="f w"><b>Value to Set</b><div class="combo inp"></div></div>
          <div class="btn up1">Update Fields</div></div>
        <div class="g g3"><div class="ck"><i></i>Show Single Impedance</div><div class="ck"><i></i>Show Diff Impedance</div></div>
      </div>
      <div class="foot">
        ${([["OK", 0, 69], ["Apply", 15, 70], ["Cancel", 14, 70], ["Refresh Materials ->", 98, 140], ["Report", 175, 70], ["Help", 21, 70]] as [string, number, number][]).map(([t, m, w], i) => html`<div class="btn ${i ? "" : "def"}" style="margin-left:${m}px;width:${w}px">${t}</div>`)}
      </div>`;
  }
}

/* ---------- taskbar pictures, 28 x 28 grid ---------- */
const chrome = svg`<circle cx="14" cy="14" r="12" fill="#fbbc05"/><path d="M14 14L3.600 8A12 12 0 0 1 24.400 8z" fill="#ea4335"/><path d="M3.600 8A12 12 0 0 0 14 26l5-9-5-3z" fill="#34a853"/><path d="M24.400 8H14l5 9-5 9A12 12 0 0 0 24.400 8z" fill="#fbbc05"/><circle cx="14" cy="14" r="6" fill="#fff"/><circle cx="14" cy="14" r="4.700" fill="#1a73e8"/>`;
const orcad = svg`<path d="M6 6h5l4 5h7M6 13h6l3-5 6-4M6 20l5 1 5 3h6" stroke="#18d018" stroke-width="2" fill="none"/><circle cx="6" cy="5" r="3" fill="#18e018"/><circle cx="6" cy="13" r="2.500" fill="#18e018"/><circle cx="6" cy="21" r="3" fill="#18e018"/><circle cx="22" cy="11" r="3" fill="#18e018"/><circle cx="22" cy="24" r="3" fill="#18e018"/><path d="M3 22l6-9 4 3 5-7 5-6-2 12-4 1-2 6-4-4z" fill="#e01818"/>`;
const APPS: [any, string][] = [
  [svg`<path d="M14 2C7 2 2 7 2 13c2-5 8-7 12-4 3 2 2 5 1 6 1 4 8 4 11-1C26 6 21 2 14 2z" fill="#35c1b1"/><path d="M14 2c7 0 12 5 12 10 0 4-3 6-6 6s-5-1-4-4c2-3-2-6-6-6C5 8 3 11 2 13 2 7 7 2 14 2z" fill="#45cf8b" opacity=".8"/><path d="M2 13c2-5 8-7 12-4-5 0-7 5-5 10 2 5 8 6 13 4-3 4-12 5-16 0-3-3-4-6-4-10z" fill="#1b75cf"/><path d="M9 19c2 5 8 6 13 4-2 2-5 3-8 3-5 0-8-6-5-7z" fill="#0c4f9e"/>`, ""],
  [svg`<path d="M3 4h8l2 3h12v16H3z" fill="#e9b23c"/><path d="M3 9h22v14H3z" fill="#fbd878"/><path d="M8 23v-7h12v7h-4v-4h-4v4z" fill="#3d8ed8"/>`, "run"],
  [svg`<path d="M9 8V4h10v4" fill="none" stroke="#3ba6e8" stroke-width="2"/><rect x="3" y="7" width="22" height="19" rx="2" fill="#f3f3f3"/><path d="M9 12h4.500v4.500H9z" fill="#f25022"/><path d="M14.500 12H19v4.500h-4.500z" fill="#7fba00"/><path d="M9 17.500h4.500V22H9z" fill="#00a4ef"/><path d="M14.500 17.500H19V22h-4.500z" fill="#ffb900"/>`, ""],
  [svg`<path d="M2 11L14 2l12 9v14H2z" fill="#0f6cbd"/><path d="M4 11h20v10H4z" fill="#fff"/><path d="M2 11l12 9 12-9v15H2z" fill="#3aa5e8"/><path d="M2 26l12-8 12 8z" fill="#1f86d6"/>`, ""],
  [chrome, ""],
  [svg`<path d="M14 2l6 6-6 6-6-6z" fill="#e8704f"/><path d="M8 8l6 6-6 6-6-6z" fill="#7ba7e6"/><path d="M20 8l6 6-6 6-6-6z" fill="#6dbb55"/><path d="M14 14l6 6-6 6-6-6z" fill="#f3d65a"/><path d="M12 7l6 7h-4v6M14 14l-4 2" stroke="#222" stroke-width="2" fill="none"/><circle cx="18" cy="14" r="2" fill="#222"/><circle cx="14" cy="20" r="2" fill="#222"/>`, "run"],
  [svg`${chrome}<circle cx="19.500" cy="19.500" r="7" fill="#c43c12"/><circle cx="19.500" cy="19.500" r="1.200" fill="#f3c9a8"/>`, "run"],
  [svg`<rect x="2" y="2" width="24" height="24" fill="#555"/><path d="M5 2h18l2 8H3z" fill="#6d8a3a"/><path d="M2 9h10v10H2z" fill="#1593c7"/><path d="M3 20h21l-4 6H8z" fill="#b0121a"/><path d="M10 5l16 9-16 9v-6H6v-6h4z" fill="#fff"/>`, ""],
  [svg`${chrome}<circle cx="19.500" cy="19.500" r="7.500" fill="#7a4cc0"/><text x="13.500" y="22.500" font-size="7.500" font-family="Noto Sans CJK KR" font-weight="700" fill="#fff" textLength="12" lengthAdjust="spacingAndGlyphs">정현</text>`, "run"],
  [orcad, "run active"],
  [svg`<path d="M8 5l15-3 3 19-3 4-18-2z" fill="#e8eef0"/><path d="M8 4l14-1-2 20-16-1z" fill="#5ea6b8"/><path d="M8 4l14-1-1 8-15 2z" fill="#a8d8e0"/><path d="M22 3l4 18-6 2z" fill="#b9c4c8"/>`, "run"],
];

@customElement("app-root")
export class AppRoot extends LitElement {
  static styles = css`
    :host { display: flex; flex-direction: column; position: relative; width: 1920px; height: 1080px; overflow: hidden; background: #f0eef0; font: 12px "Noto Sans", "Open Sans", "Noto Sans CJK KR", sans-serif; color: #000; }
    svg { display: block; }
    .defs { position: absolute; width: 0; height: 0; }
    .dlg { position: absolute; left: 541px; top: 289px; }
    .title { height: 23px; background: #fff; display: flex; align-items: center; padding: 0 19px 0 2px; box-sizing: border-box; }
    .title .t { flex: 1; margin-left: 4px; white-space: pre; letter-spacing: -.13px; padding-bottom: 1px; }
    .wb { display: flex; gap: 34px; }
    .menu { height: 20px; display: flex; align-items: center; padding: 0 7px 2px; gap: 14px; color: #4a4a4a; background: #f0f0f0; box-sizing: border-box; letter-spacing: -.3px; }
    .menu u { text-underline-offset: 2px; text-decoration-thickness: 1px; }
    .cad { margin-left: auto; font: 700 17px/18px "Open Sans", sans-serif; letter-spacing: 2px; color: #222; display: flex; margin-right: -2px; }
    .cad i { font-style: normal; background: linear-gradient(#d2343a 0 0) center 2px / 7px 2px no-repeat; }
    .red { height: 3px; background: #b80d0d; }
    .bars { height: 70px; }
    .bar { display: flex; width: 1182px; height: 34px; background: linear-gradient(#e7e6e7, #d8d7d8 40%, #c2c1c3); }
    .bar + .bar { height: 35px; }
    .grp { box-sizing: border-box; display: flex; align-items: center; border-right: 1px dotted #fff; border-top: 1px solid #efeeef; padding-bottom: 4px; }
    .handle { width: 2.500px; height: 23px; background: repeating-linear-gradient(#1f6fb8 0 3px, transparent 3px 4.900px); margin-right: -1px; flex: none; }
    .cell { width: 31.100px; display: flex; justify-content: center; flex: none; }
    .cell.n { width: 22.500px; }
    .ic { width: 22px; height: 22px; }
    .mid { display: flex; height: 807px; }
    .side { width: 36px; }
    .sg { width: 34px; box-sizing: border-box; background: linear-gradient(90deg, #ececec, #dadada 50%, #c4c3c4); border-bottom: 1px solid #aaa; border-radius: 0 0 3px 3px; display: flex; flex-direction: column; align-items: center; padding-right: 3px; }
    .hh { width: 23px; height: 2.500px; margin: 3px 0 0; background: repeating-linear-gradient(90deg, #1f6fb8 0 3px, transparent 3px 4.900px); }
    .sc { height: 30.800px; display: flex; align-items: center; }
    .sc .ic { width: 20px; height: 20px; }
    .view { width: 1852px; box-sizing: border-box; border-top: 2px solid #7c807c; height: 807px; border-bottom: 1px solid #fff; }
    .tabs { padding: 22px 0 0 10px; }
    .tab { width: 19px; height: 68px; box-sizing: border-box; border: 1px solid #8ea0b8; border-right: 0; writing-mode: vertical-rl; font: 12px/15px "DejaVu Sans", Verdana, sans-serif; padding-top: 3px; color: #222; letter-spacing: -.25px; display: flex; align-items: flex-end; }
    .dock { display: flex; padding: 5px 0 0 36px; height: 95px; box-sizing: border-box; gap: 7px; }
    .cmd { width: 1478px; height: 89.500px; box-sizing: border-box; border: 1px solid #8a8a8a; border-right: 0; display: flex; }
    .grip { width: 15px; background: linear-gradient(90deg, #e8e8e8, #bdbcbd); display: flex; flex-direction: column; align-items: center; box-sizing: border-box; padding: 3px 0 2px; height: 87px; }
    .grip.w { width: 16px; padding-right: 3px; }
    .vt { writing-mode: vertical-rl; transform: rotate(180deg); font: 9px/12px "DejaVu Sans", sans-serif; letter-spacing: -.4px; margin-bottom: 2px; white-space: nowrap; }
    .w .vt { font: 700 9px/12px "Liberation Sans", sans-serif; letter-spacing: 0; }
    .sq { width: 8px; height: 3px; background: repeating-linear-gradient(90deg, #1f6fb8 0 3px, transparent 3px 5px); }
    .log { width: 1445px; height: 84px; box-sizing: border-box; border: 1px solid #6d6d6d; border-top-width: 2px; background: #fff; font: 11px/13px "Liberation Sans", sans-serif; letter-spacing: -.15px; padding: 13px 0 0 2px; }
    .vs { width: 17px; height: 83px; display: flex; flex-direction: column; background: #f6f5f6; }
    .sb { width: 17px; height: 16px; box-sizing: border-box; background: #f0eef0; border: 1px solid; border-color: #fff #6d6d6d #6d6d6d #fff; display: flex; align-items: center; justify-content: center; }
    .sb.s { height: 7px; }
    .fill { flex: 1; }
    .up { border: 4px solid transparent; border-bottom-color: #000; border-top: 0; }
    .dn { border: 4px solid transparent; border-top-color: #000; border-bottom: 0; }
    .world { width: 368px; height: 89.500px; box-sizing: border-box; border: 1px solid #8a8a8a; display: flex; }
    .map { background: #000; border: 2px solid #fff; border-bottom-width: 3px; flex: 1; }
    .status { display: flex; height: 22px; padding-top: 4px; box-sizing: border-box; gap: 2px; font: 11px/17px "Liberation Sans", sans-serif; letter-spacing: -.15px; border-bottom: 1px solid #fff; }
    .st { box-sizing: border-box; height: 17px; border: 1px solid; border-color: #8a8a8a #fff #fff #8a8a8a; text-align: center; line-height: 16px; white-space: nowrap; flex: none; }
    .st.first { text-align: left; padding-left: 1px; }
    .st.ready { background: #0f0; color: #063; }
    .st.drc { background: #f00; color: #500; }
    .st.key { border-color: #fff #555 #555 #fff; box-shadow: 1px 1px #777; }
    .task { height: 40px; background: #1d1d1e; display: flex; color: #fff; }
    .start { width: 48px; display: flex; align-items: center; justify-content: center; }
    .search { width: 288px; box-sizing: border-box; background: #f1f1f1; border-top: 1px solid #bbb; border-left: 1px solid #888; display: flex; align-items: center; color: #555; font-size: 15px; padding-left: 11px; }
    .search span { margin-left: 13px; flex: 1; padding-bottom: 2px; }
    .app { width: 47px; margin-right: 2px; display: flex; align-items: center; justify-content: center; }
    .app.tv { margin-right: 3.500px; }
    .app.run { background: linear-gradient(#76b9ed 0 0) center bottom / 40px 2px no-repeat; }
    .app.active { background: linear-gradient(#76b9ed 0 0) center bottom / 47px 2px no-repeat, #444446; }
    .tray { margin-left: auto; display: flex; align-items: center; font-size: 13px; }
    .wt { margin: 0 25px 2px 0; font-size: 14px; white-space: pre; word-spacing: 5px; }
    .clock { width: 72px; margin-left: 7px; text-align: center; line-height: 18px; font-size: 12px; letter-spacing: -.1px; white-space: nowrap; }
    .ti { display: flex; gap: 6px; align-items: center; }
  `;
  private group = (g: Group) => html`<div class="grp" style="width:${g.w}px;padding-left:${g.pad}px"><div class="handle"></div>${g.items.map((n) => n.endsWith("~") ? html`<div class="cell n">${icon(n.slice(0, -1))}</div>` : html`<div class="cell">${icon(n)}</div>`)}</div>`;
  private menu = (m: string) => {
    const i = m.indexOf("_");
    return html`<span>${m.slice(0, i)}<u>${m[i + 1]}</u>${m.slice(i + 2)}</span>`;
  };
  private gripMarks = () => html`<svg width="9" height="34" viewBox="0 0 9 34"><path d="M2 3l5 5M7 3L2 8" stroke="#000" stroke-width="1.600"/><path d="M6 16v6l-3-3z"/><path d="M1 32h7M4.500 34v-5M2.500 29.500h4" stroke="#000"/></svg>`;
  render() {
    const st: [string, number, string][] = [["xsection", 1002, "first"], ["Ready", 52, "ready"], ["", 131, ""], ["Signal", 120, ""], ["10.8629, 2.2461", 131, ""], ["P", 15, "key"], ["A", 15, "key"], ["", 102, ""], ["", 42, ""], ["General edit", 120, ""], ["Off", 71, ""], ["DRC", 51, "drc"], ["0", 41, ""]];
    return html`
      <svg class="defs"><defs><linearGradient id="blue" x1="0" y1="0" x2="0" y2="1"><stop offset="0" stop-color="#dbe4f8"/><stop offset="1" stop-color="#7f98d0"/></linearGradient></defs></svg>
      <div class="title">
        <svg width="17" height="18" viewBox="2 1 24 26">${orcad}</svg>
        <div class="t">OrCAD PCB Designer Professional w/PSpice: PMOD2BNCSIMPLE_v1_02.brd  Project: C:.../PMOD2BNC_SIMPLE_V1_0</div>
        <div class="wb">
          <svg width="12" height="12"><path d="M1 6.500h10" stroke="#000"/></svg>
          <svg width="12" height="12"><path d="M3.500 3V.5h8v8H9" fill="none" stroke="#000"/><rect x="1.500" y="2.500" width="7" height="8" fill="none" stroke="#000"/></svg>
          <svg width="12" height="12"><path d="M1 1l10 10M11 1L1 11" stroke="#000"/></svg>
        </div>
      </div>
      <div class="menu">${MENUS.map(this.menu)}<div class="cad">c<i>a</i>dence</div></div>
      <div class="red"></div>
      <div class="bars"><div class="bar">${ROW1.map(this.group)}</div><div class="bar">${ROW2.map(this.group)}</div></div>
      <div class="mid">
        <div class="side">${SIDE.map((s) => html`<div class="sg" style="height:${s.h}px"><div class="hh"></div>${s.items.map((n) => html`<div class="sc">${icon(n)}</div>`)}</div>`)}</div>
        <div class="view"><pcb-canvas></pcb-canvas></div>
        <div class="tabs">${["Visibility", "Find", "Options"].map((t) => html`<div class="tab">${t}</div>`)}</div>
      </div>
      <div class="dock">
        <div class="cmd">
          <div class="grip">${this.gripMarks()}<div class="fill"></div><div class="vt">Commar</div><div class="sq"></div></div>
          <div class="log">${["Loading signal.cxt", "Loading floor.cxt", "Loading skillExt.cxt", "Loading axlcore.cxt", "Command >"].map((l) => html`<div>${l}</div>`)}</div>
          <div class="vs"><div class="sb"><i class="up"></i></div><div class="fill"></div><div class="sb s"></div><div class="sb"><i class="dn"></i></div></div>
        </div>
        <div class="world">
          <div class="grip w">${this.gripMarks()}<div class="fill"></div><div class="vt">WorldVi</div><div class="sq"></div></div>
          <div class="map"><svg width="346" height="82"><rect x="49.500" y="1.500" width="179" height="77" fill="none" stroke="#6c8a3e"/><rect x="49.500" y="2.500" width="53" height="75" fill="none" stroke="#b9c8a0"/></svg></div>
        </div>
      </div>
      <div class="status">${st.map(([t, w, c]) => html`<div class="st ${c}" style="width:${w}px">${t}</div>`)}</div>
      <div class="task">
        <div class="start"><svg width="17" height="17"><path d="M0 2.500L7.500 1.300V8H0zM8.500 1.200L17 0v8H8.500zM0 9h7.500v6.700L0 14.500zM8.500 9H17v8l-8.500-1.200z" fill="#fff"/></svg></div>
        <div class="search">
          <svg width="17" height="18"><circle cx="10.500" cy="6.500" r="5.500" fill="none" stroke="#222" stroke-width="1.400"/><path d="M6.500 10.500L.8 17" stroke="#222" stroke-width="1.500"/></svg>
          <span>찾기</span>
          <svg width="77" height="39" viewBox="0 0 77 39"><path d="M0 39l8-22 12 10 16-6 20 4 21-5v19z" fill="#2a3f66"/><path d="M8 17l10 9-14 5z" fill="#43284a"/><path d="M20 27l20-4 37 8v8H0z" fill="#8fb6cf"/><path d="M4 31c20-4 30 4 73 2v6H0z" fill="#5b8db3"/><path d="M10 12h62v12H16z" fill="#f1f1f1" opacity=".6"/><path d="M6 25h71" stroke="#4a1d1d" stroke-width="1.600"/><path d="M28 12v21M72 12v21" stroke="#4a1d1d" stroke-width="2"/><path d="M8 25Q20 22 28 12Q38 24 50 24T72 12L77 17M34 24Q50 8 66 24" fill="none" stroke="#5b2424" stroke-width="1.200"/><path d="M16 21v4M20 18v7M24 15v10M33 16v9M38 18v7M43 17v8M48 16v9M53 16v9M58 17v8M63 19v6M67 17v8" stroke="#5b2424"/><path d="M48 36c8-4 16-3 20-1z" fill="#2c3148"/></svg>
        </div>
        <div class="app tv"><svg width="20" height="20" viewBox="0 0 20 20"><path d="M1 1v3h11V1M1 19v-3h11v3M1 6.500h11v7H1zM16 1v3M16 9.500v9.500" fill="none" stroke="#fff" stroke-width="1.300"/><rect x="14.500" y="5" width="3.500" height="3.500" fill="#fff"/></svg></div>
        ${APPS.map(([p, c]) => html`<div class="app ${c}"><svg width="28" height="28" viewBox="0 0 28 28">${p}</svg></div>`)}
        <div class="tray">
          <svg width="30" height="28"><circle cx="11" cy="14.500" r="10" fill="#f58a1f"/><circle cx="8" cy="11" r="6" fill="#ffb13d" opacity=".6"/><circle cx="17" cy="6.500" r="6" fill="#c8202a"/><text x="15" y="10" font-size="9" fill="#fff" font-family="Noto Sans">1</text></svg>
          <span class="wt">8°C 맑음</span>
          <div class="ti">
            <svg width="14" height="14"><path d="M1 10l5.500-6 5.500 6" fill="none" stroke="#fff" stroke-width="1.300"/></svg>
            <svg width="20" height="18"><path d="M2 6.500h3l4-4v13l-4-4H2z" fill="none" stroke="#fff" stroke-width="1.100"/><path d="M11 6c2 2 2 4 0 6M13 4c3.500 3 3.500 7 0 10M15.500 2c4 4 4 10 0 14" fill="none" stroke="#fff"/></svg>
            <svg width="18" height="18"><path d="M4 3.500h12.500v9H6M10 13v3M7 16.500h7M1 2v4h4V2zM3 6v10" fill="none" stroke="#fff" stroke-width="1.200"/></svg>
            <svg width="16" height="16"><circle cx="8" cy="8" r="7" fill="#8e8e8e"/><path d="M5 5l6 6M11 5l-6 6" stroke="#222" stroke-width="1.800"/></svg>
          </div>
          <div class="clock">오후 12:31<br>2023-11-07</div>
          <svg width="57" height="38"><path d="M16 6h16v14H22l-4 4v-4h-2z" fill="#fff"/><path d="M19 10h10M19 13h10M19 16h7" stroke="#1d1d1e" stroke-width="1.400"/><circle cx="32" cy="26" r="9.500" fill="#4a4a4a" stroke="#999"/><text x="25.500" y="30.500" font-size="12" fill="#fff" font-family="Noto Sans" textLength="13">13</text></svg>
        </div>
      </div>
      <cross-section-dialog class="dlg"></cross-section-dialog>`;
  }
}
